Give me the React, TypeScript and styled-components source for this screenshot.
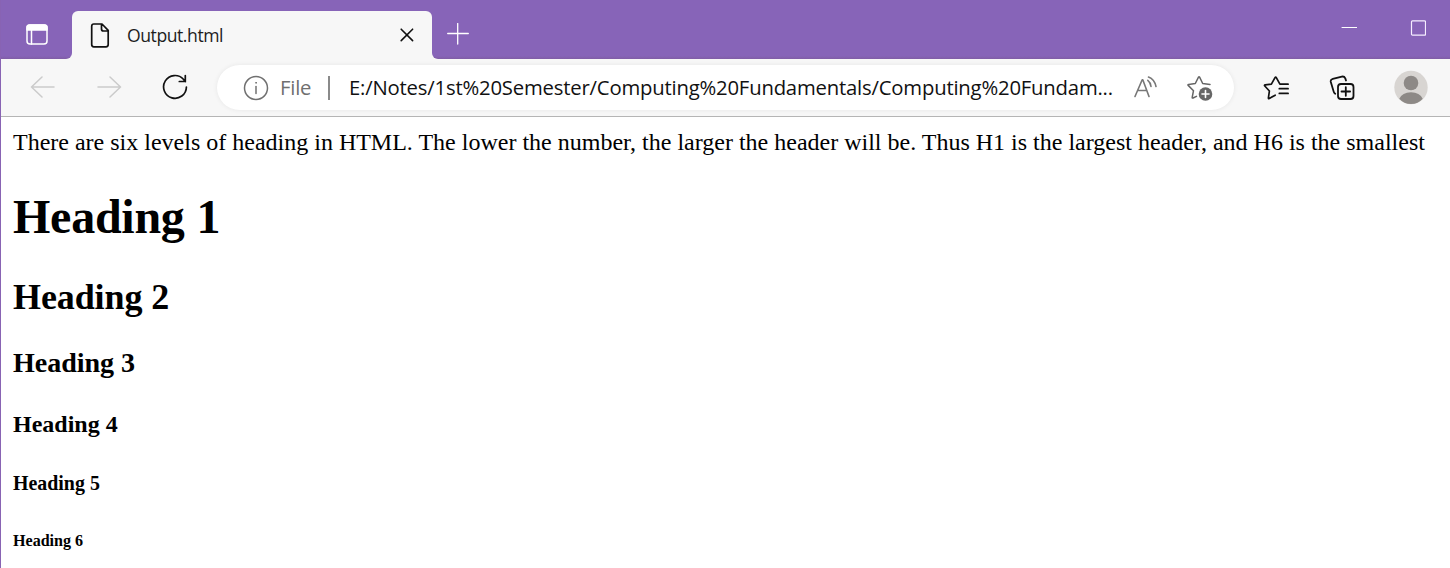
import React from "react";
import styled, { createGlobalStyle } from "styled-components";

const GlobalStyle = createGlobalStyle`
  * { box-sizing: border-box; }
  body { margin: 0; background: #fff; overflow: hidden; }
`;

const Window = styled.div`
  width: 1450px;
  height: 568px;
  display: flex;
  flex-direction: column;
  border-left: 1px solid #8863b3;
  background: #fff;
  overflow: hidden;
`;

const TitleBar = styled.header`
  height: 59px;
  flex: none;
  display: flex;
  align-items: flex-end;
  margin-left: -1px;
  background: #f7f7f7;
`;

const Frame = styled.div<{ $width?: number; $corner: "left" | "right" }>`
  ${(p) => (p.$width ? `width: ${p.$width}px;` : "flex: 1;")}
  height: 59px;
  display: flex;
  background: linear-gradient(#8764b8 56px, #805da5 59px);
  border-bottom-right-radius: ${(p) => (p.$corner === "right" ? 6 : 0)}px;
  border-bottom-left-radius: ${(p) => (p.$corner === "left" ? 6 : 0)}px;
`;

const TabSlot = styled.div`
  width: 360px;
  height: 59px;
  padding-top: 11px;
  background: linear-gradient(#8764b8 40px, #f7f7f7 40px);
`;

const Tab = styled.div`
  height: 48px;
  display: flex;
  align-items: center;
  background: #f7f7f7;
  border-radius: 6px 6px 0 0;
`;

const TabTitle = styled.span`
  flex: 1;
  padding: 0 0 1px 15px;
  font: 17.6px/26px "Open Sans", "Noto Sans", sans-serif;
  letter-spacing: -0.45px;
  color: #1d1d1d;
`;

const Spacer = styled.div`
  flex: 1;
`;

const Icon = styled.svg<{ $ml?: number; $mt?: number; $mr?: number }>`
  display: block;
  flex: none;
  margin: ${(p) => p.$mt ?? 0}px ${(p) => p.$mr ?? 0}px 0 ${(p) => p.$ml ?? 0}px;
  fill: none;
  stroke-linecap: round;
  stroke-linejoin: round;
`;

const Toolbar = styled.nav`
  height: 58px;
  flex: none;
  display: flex;
  align-items: center;
  background: #f7f7f7;
  border-bottom: 1px solid #b5b5b5;
`;

const AddressBar = styled.div`
  width: 1017px;
  height: 45px;
  margin-left: 29px;
  display: flex;
  align-items: center;
  background: #fff;
  border-radius: 23px;
  box-shadow: 0 0 5px rgba(0, 0, 0, 0.07);
`;

const Scheme = styled.span`
  width: 59px;
  padding: 0 0 1px 11px;
  font: 20.3px/28px "Open Sans", "Noto Sans", sans-serif;
  letter-spacing: -0.2px;
  color: #707070;
`;

const Divider = styled.span`
  width: 2px;
  height: 24px;
  margin-top: 1px;
  background: #8a8a8a;
`;

const Url = styled.span`
  width: 775px;
  padding: 0 0 1px 19px;
  font: 20.3px/28px "Open Sans", "Noto Sans", sans-serif;
  letter-spacing: -0.19px;
  white-space: nowrap;
  color: #111;
`;

const Page = styled.main`
  flex: 1;
  padding: 11px 0 0 12px;
  font-family: "Liberation Serif", "Times New Roman", serif;
  color: #000;
  white-space: nowrap;
`;

const Intro = styled.p`
  margin: 0;
  font-size: 24px;
  line-height: 28px;
`;

const Heading = styled.h1<{ $size: number; $line: number; $gap: number; $tracking?: number }>`
  margin: ${(p) => p.$gap}px 0 0;
  font-size: ${(p) => p.$size}px;
  line-height: ${(p) => p.$line}px;
  letter-spacing: ${(p) => p.$tracking ?? 0}px;
  font-weight: 700;
`;

const headings = [
  { tag: "h1", size: 48, line: 56, gap: 33, tracking: -0.25 },
  { tag: "h2", size: 36, line: 42, gap: 31, tracking: -0.1 },
  { tag: "h3", size: 28.08, line: 32, gap: 29, tracking: -0.05 },
  { tag: "h4", size: 24, line: 28, gap: 31, tracking: 0 },
  { tag: "h5", size: 19.92, line: 24, gap: 33, tracking: 0 },
  { tag: "h6", size: 16.08, line: 18, gap: 37, tracking: 0 },
] as const;

export default function App() {
  return (
    <>
      <GlobalStyle />
      <Window>
        <TitleBar>
          <Frame $width={72} $corner="right">
            <Icon $ml={26} $mt={24} width="22" height="21" viewBox="0 0 22 21" stroke="#fff" strokeWidth="1.5">
              <rect x="1" y="1" width="20" height="19" rx="3" />
              <path d="M1 6V3.5Q1 1 3.5 1h15Q21 1 21 3.5V6z" fill="#fff" />
              <path d="M5.5 6v14" />
            </Icon>
          </Frame>
          <TabSlot>
            <Tab>
              <Icon $ml={18} width="22" height="25" viewBox="0 0 22 25" stroke="#111" strokeWidth="1.7">
                <path d="M3.8 1H12l6.2 6.3v14.2q0 2.3-2.2 2.3H3.8q-2.1 0-2.1-2.3V3.2Q1.7 1 3.8 1M11.5 1v5q0 2 2 2h4.5" />
              </Icon>
              <TabTitle>Output.html</TabTitle>
              <Icon $mr={18} width="14" height="14" viewBox="0 0 14 14" stroke="#111" strokeWidth="1.6">
                <path d="M1.2 1.2l11.4 11.4M12.6 1.2L1.2 12.6" />
              </Icon>
            </Tab>
          </TabSlot>
          <Frame $corner="left">
            <Icon $ml={15} $mt={23} width="22" height="22" viewBox="0 0 22 22" stroke="#fff" strokeWidth="1.3">
              <path d="M.7 10.5h20.6M10.7.5v20.6" />
            </Icon>
            <Spacer />
            <Icon $mt={20} $mr={53} width="16" height="16" viewBox="0 0 16 16" stroke="#fff" strokeWidth="1">
              <path d="M1 7.5h15" />
            </Icon>
            <Icon $mt={20} $mr={24} width="16" height="16" viewBox="0 0 16 16" stroke="#f6eeff" strokeWidth="1.2">
              <rect x="1.5" y=".8" width="14" height="14.4" rx="1" />
            </Icon>
          </Frame>
        </TitleBar>
        <Toolbar>
          <Icon $ml={29} $mt={-2} width="25" height="22" viewBox="0 0 25 22" stroke="#cbcbcb" strokeWidth="1.5">
            <path d="M24 11H1.5M12 1L1.5 11 12 21" />
          </Icon>
          <Icon $ml={42} $mt={-2} width="25" height="22" viewBox="0 0 25 22" stroke="#cbcbcb" strokeWidth="1.5">
            <path d="M1 11h22.5M13 1l10.5 10L13 21" />
          </Icon>
          <Icon $ml={40} $mt={-1} width="26" height="26" viewBox="0 0 26 26" stroke="#111" strokeWidth="1.7">
            <path d="M24.4 13A11.4 11.4 0 1 1 21.4 5.2L23.3 7.5M23.3 1.5v6h-6" strokeLinejoin="miter" />
          </Icon>
          <AddressBar>
            <Icon $ml={26} width="26" height="26" viewBox="0 0 26 26" stroke="#707070" strokeWidth="1.5">
              <circle cx="13" cy="13" r="11.5" />
              <path d="M13 11.5v7" />
              <circle cx="13" cy="7.8" r=".5" fill="#707070" strokeWidth=".8" />
            </Icon>
            <Scheme>File</Scheme>
            <Divider />
            <Url>E:/Notes/1st%20Semester/Computing%20Fundamentals/Computing%20Fundam...</Url>
            <Icon $ml={28} $mt={-2} width="26" height="24" viewBox="0 0 26 24" stroke="#777" strokeWidth="1.6">
              <path d="M2 21.5L9.2 4.7h.6L16 21.5M4.6 15.5h9.2" />
              <path d="M14.8 5.3q2.7 2 3.2 6.2M15.5 2q6 2.3 7.5 9.5" />
            </Icon>
            <Icon $ml={27} width="28" height="28" viewBox="0 0 28 28" stroke="#666" strokeWidth="1.5">
              <path d="M10.5 22.3L7 24q-.9.4-.8-.6l1.3-6.7-5.3-5.3q-.7-.8.4-1L9.3 9.5l3.2-6.3q.6-.9 1.1 0l3.1 6.3 7.3.9" />
              <circle cx="19.5" cy="20" r="6.8" fill="#666" stroke="none" />
              <path d="M19.5 16.5v7M16 20h7" stroke="#fff" strokeWidth="1.6" />
            </Icon>
          </AddressBar>
          <Icon $ml={28} width="28" height="26" viewBox="0 0 28 26" stroke="#111" strokeWidth="1.7">
            <path d="M13.2 20.2l-6 3.3q-1 .4-.8-.7l1-6.8-4.6-5q-.8-.9.4-1.1l6.2-.8 3.6-6.5q.7-1.1 1.3 0l3.6 6.6h8.2M17.3 13.7h8.8M17.3 18.4h8.8" />
          </Icon>
          <Icon $ml={39} width="26" height="26" viewBox="0 0 26 26" stroke="#111" strokeWidth="1.8">
            <rect x="9" y="9" width="15.5" height="15" rx="3" />
            <path d="M16.8 12.2v8.6M12.5 16.5h8.6M6.2 18.8q-1.2-.7-1.7-2.7L1.8 7q-.6-2.5 2-3.2l9-2.2q2.4-.6 3.5 1.8l.7 2.1" />
          </Icon>
          <Icon $ml={38} width="36" height="36" viewBox="0 0 36 36">
            <circle cx="18" cy="17.5" r="16.7" fill="#d8d5d2" />
            <circle cx="18" cy="13" r="7.3" fill="#8d8986" />
            <path d="M6.3 28.8Q9.2 22.2 18 22.2t11.7 6.6Q25 34.1 18 34.1T6.3 28.8z" fill="#8d8986" />
          </Icon>
        </Toolbar>
        <Page>
          <Intro>
            There are six levels of heading in HTML. The lower the number, the larger the header will be. Thus H1 is the largest header, and H6 is the smallest
          </Intro>
          {headings.map((h, i) => (
            <Heading key={h.tag} as={h.tag} $size={h.size} $line={h.line} $gap={h.gap} $tracking={h.tracking}>
              Heading {i + 1}
            </Heading>
          ))}
        </Page>
      </Window>
    </>
  );
}
